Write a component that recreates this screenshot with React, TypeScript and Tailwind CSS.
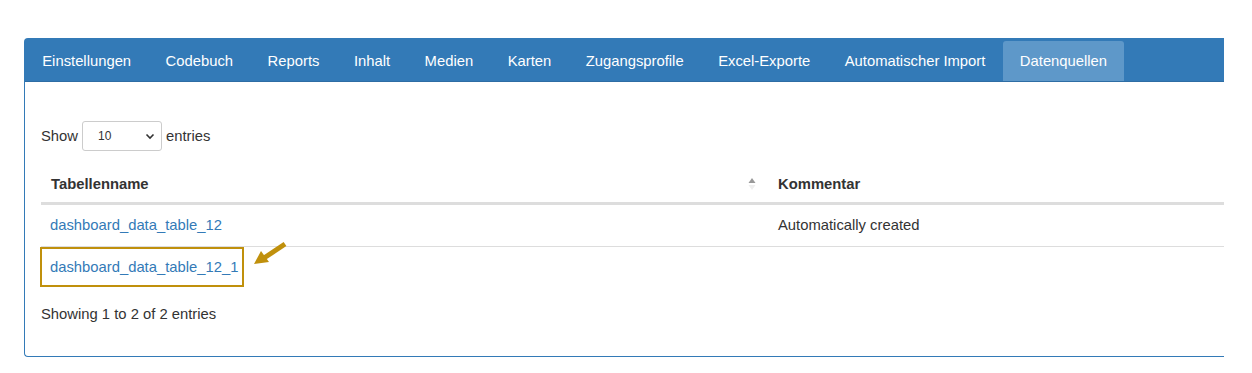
import React from "react";

const tabs = [
  "Einstellungen",
  "Codebuch",
  "Reports",
  "Inhalt",
  "Medien",
  "Karten",
  "Zugangsprofile",
  "Excel-Exporte",
  "Automatischer Import",
  "Datenquellen",
];

export default function App() {
  return (
    <div
      className="w-[1252px] h-[373px] bg-white pt-[38px] pl-[24px] overflow-hidden text-[14.8px] text-[#333]"
      style={{ fontFamily: '"Liberation Sans", Arial, sans-serif' }}
    >
      {/* Panel */}
      <div className="w-[1200px] h-[319px] border-l border-t border-b border-[#337ab7] rounded-l-[4px] flex flex-col">
        {/* Nav tabs */}
        <div className="h-[43px] bg-[#337ab7] flex items-end border-b border-[#2e6da4]">
          {tabs.map((t) => (
            <div
              key={t}
              className={
                t === "Datenquellen"
                  ? "h-[40px] px-[17.25px] flex items-center text-white bg-[#5e98c9] rounded-t-[3px]"
                  : "h-[40px] px-[17.25px] flex items-center text-white"
              }
            >
              {t}
            </div>
          ))}
        </div>

        {/* Body */}
        <div className="pl-[16px] pt-[39px] flex flex-col">
          {/* Show entries */}
          <div className="flex items-center h-[30px] gap-[4px]">
            <span>Show</span>
            <div className="w-[80px] h-[30px] border border-[#ccc] rounded-[3px] flex items-center justify-between pl-[15px] pr-[6px] text-[12px] text-[#333]">
              <span>10</span>
              <svg width="10" height="10" viewBox="0 0 10 10">
                <path d="M1.5 3.5 L5 7 L8.5 3.5" fill="none" stroke="#333" strokeWidth="1.6" />
              </svg>
            </div>
            <span>entries</span>
          </div>

          {/* Table */}
          <div className="mt-[15px] w-[1183px]">
            <div className="flex h-[39px] items-center border-b-[3px] border-[#ddd] font-bold">
              <div className="w-[727px] pl-[10px] flex items-center justify-between pr-[12px]">
                <span>Tabellenname</span>
                <svg width="8" height="14" viewBox="0 0 8 14">
                  <path d="M4 1 L7.5 6 L0.5 6 Z" fill="#999" />
                  <path d="M4 13 L7.5 8 L0.5 8 Z" fill="#eee" />
                </svg>
              </div>
              <div className="pl-[10px]">Kommentar</div>
            </div>
            <div className="flex h-[42px] items-center border-b border-[#ddd]">
              <div className="w-[727px] pl-[9px] text-[#337ab7]">dashboard_data_table_12</div>
              <div className="pl-[10px]">Automatically created</div>
            </div>
            <div className="flex h-[40px] items-center relative">
              <div className="-ml-[1px] h-[40px] w-[204px] border-2 border-[#c0900c] flex items-center pl-[8px] text-[#337ab7]">
                dashboard_data_table_12_1
              </div>
              <svg
                className="absolute left-[210px] top-[-6px]"
                width="40"
                height="30"
                viewBox="0 0 40 30"
              >
                <path d="M34 3 L13 17" stroke="#c0900c" strokeWidth="5" fill="none" />
                <path d="M3 23 L10 10 L18 21 Z" fill="#c0900c" />
              </svg>
            </div>
          </div>

          <div className="mt-[16px]">Showing 1 to 2 of 2 entries</div>
        </div>
      </div>
    </div>
  );
}
